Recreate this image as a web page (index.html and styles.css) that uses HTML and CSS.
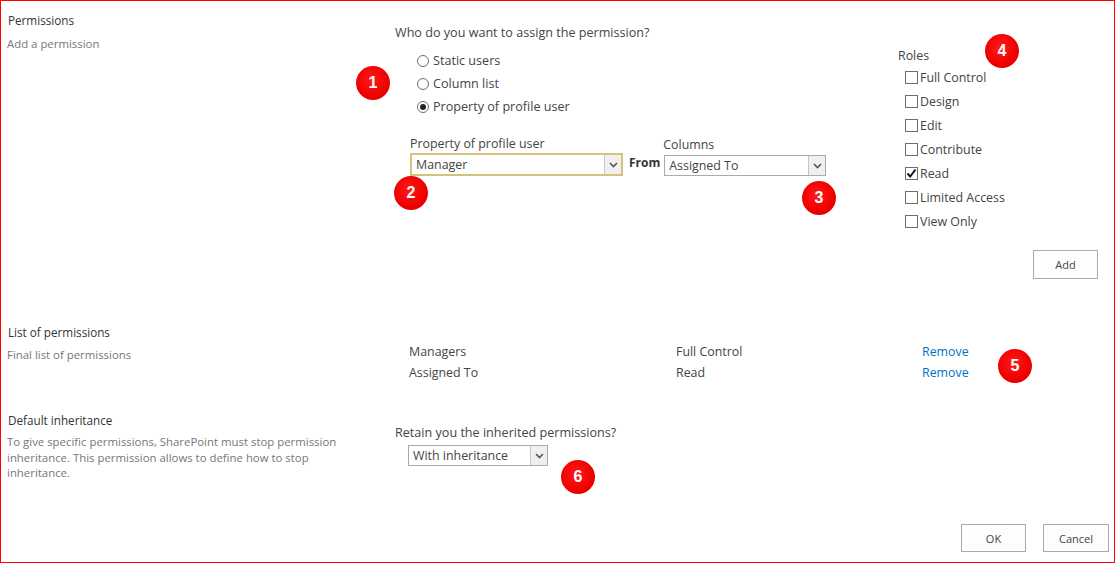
FILE: index.html
```html
<!DOCTYPE html>
<html>
<head>
<meta charset="utf-8">
<link rel="stylesheet" href="styles.css">
</head>
<body>
<div class="frame">
  <section class="sec sec-add">
    <div class="left">
      <div class="title">Permissions</div>
      <div class="desc">Add a permission</div>
    </div>
    <div class="middle">
      <div class="question">Who do you want to assign the permission?</div>
      <div class="radios">
        <div class="radio-row"><span class="radio"></span>Static users</div>
        <div class="radio-row"><span class="radio"></span>Column list</div>
        <div class="radio-row"><span class="radio checked"></span>Property of profile user</div>
      </div>
      <div class="pick-row">
        <div class="field">
          <div class="field-label">Property of profile user</div>
          <div class="select focus w-prop"><span class="sel-text">Manager</span><span class="sel-arrow"><svg width="9" height="6" viewBox="0 0 9 6"><path d="M1 1 L4.5 4.5 L8 1" fill="none" stroke="#555" stroke-width="1.6"/></svg></span></div>
        </div>
        <div class="from">From</div>
        <div class="field">
          <div class="field-label">Columns</div>
          <div class="select w-col"><span class="sel-text">Assigned To</span><span class="sel-arrow"><svg width="9" height="6" viewBox="0 0 9 6"><path d="M1 1 L4.5 4.5 L8 1" fill="none" stroke="#555" stroke-width="1.6"/></svg></span></div>
        </div>
      </div>
    </div>
    <div class="roles">
      <div class="roles-title">Roles</div>
      <div class="check-row"><span class="check"></span>Full Control</div>
      <div class="check-row"><span class="check"></span>Design</div>
      <div class="check-row"><span class="check"></span>Edit</div>
      <div class="check-row"><span class="check"></span>Contribute</div>
      <div class="check-row"><span class="check"><svg width="11" height="11" viewBox="0 0 11 11"><path d="M1.5 5.5 L4.2 8.5 L9.5 1.5" fill="none" stroke="#111" stroke-width="2"/></svg></span>Read</div>
      <div class="check-row"><span class="check"></span>Limited Access</div>
      <div class="check-row"><span class="check"></span>View Only</div>
      <div class="btn-wrap"><button class="btn btn-add">Add</button></div>
    </div>
  </section>

  <section class="sec sec-list">
    <div class="left">
      <div class="title">List of permissions</div>
      <div class="desc">Final list of permissions</div>
    </div>
    <div class="perm-table">
      <div>Managers</div><div>Full Control</div><a class="link">Remove</a>
      <div>Assigned To</div><div>Read</div><a class="link">Remove</a>
    </div>
  </section>

  <section class="sec sec-inherit">
    <div class="left">
      <div class="title">Default inheritance</div>
      <div class="desc desc-long">To give specific permissions, SharePoint must stop permission inheritance. This permission allows to define how to stop inheritance.</div>
    </div>
    <div class="middle">
      <div class="question-sm">Retain you the inherited permissions?</div>
      <div class="select w-inh"><span class="sel-text">With inheritance</span><span class="sel-arrow"><svg width="9" height="6" viewBox="0 0 9 6"><path d="M1 1 L4.5 4.5 L8 1" fill="none" stroke="#555" stroke-width="1.6"/></svg></span></div>
    </div>
  </section>

  <footer class="footer">
    <button class="btn btn-ok">OK</button>
    <button class="btn btn-cancel">Cancel</button>
  </footer>

  <span class="badge b1">1</span>
  <span class="badge b2">2</span>
  <span class="badge b3">3</span>
  <span class="badge b4">4</span>
  <span class="badge b5">5</span>
  <span class="badge b6">6</span>
</div>
</body>
</html>
```

FILE: styles.css
```css
* { box-sizing: border-box; }
html, body { margin: 0; padding: 0; background: #fff; }
body {
  font-family: "Open Sans", "Noto Sans", sans-serif;
  font-size: 12.4px;
  color: #444;
}
.frame {
  position: relative;
  width: 1115px;
  height: 563px;
  border: 1px solid #ff0000;
  display: flex;
  flex-direction: column;
  padding: 10px 16px 0 6px;
}
.sec { display: flex; }
.left { width: 388px; flex: none; }
.title { line-height: 18px; color: #333; font-size: 11.7px; padding-left: 1px; }
.desc { line-height: 16px; color: #777; font-size: 11.4px; margin-top: 7px; }

.middle { flex: 1; }
.question { margin-top: 13px; line-height: 18px; font-size: 12.6px; }
.radios { margin-top: 7px; padding-left: 22px; }
.radio-row { height: 23px; display: flex; align-items: center; font-size: 12.6px; }
.radio {
  width: 12px; height: 12px; border: 1px solid #6d6d6d; border-radius: 50%;
  margin-right: 4px; position: relative; background: #fff;
}
.radio.checked::after {
  content: ""; position: absolute; left: 2px; top: 2px; width: 6px; height: 6px;
  border-radius: 50%; background: #222;
}
.pick-row { display: flex; align-items: flex-end; margin-top: 17px; padding-left: 15px; }
.field-label { line-height: 18px; }
.select {
  height: 21px; border: 1px solid #ababab; background: #fff; display: flex;
  align-items: stretch; margin-top: 1px; margin-left: 1px;
}
.select.focus { border: 2px solid #d5c27a; height: 23px; margin-top: 0; margin-left: 0; }
.sel-text { flex: 1; padding-left: 4px; line-height: 19px; color: #444; }
.sel-arrow {
  width: 17px; background: #f0f0f0; border-left: 1px solid #c6c6c6;
  display: flex; align-items: center; justify-content: center;
}
.w-prop { width: 213px; }
.w-col { width: 162px; }
.w-inh { width: 140px; margin-left: 13px; margin-top: 3px; }
.from { font-weight: 700; color: #333; margin: 0 3px 4px 6px; line-height: 18px; font-size: 12px; }

.roles { width: 200px; flex: none; }
.roles-title { margin-top: 36px; line-height: 18px; }
.check-row { height: 24px; display: flex; align-items: center; padding-left: 7px; }
.check {
  width: 13px; height: 13px; border: 1px solid #6d6d6d; background: #fff;
  margin-right: 2px; display: flex; align-items: center; justify-content: center;
}
.btn-wrap { display: flex; justify-content: flex-end; margin-top: 17px; }
.btn {
  font-family: "Open Sans", "Noto Sans", sans-serif; font-size: 11px; color: #444;
  background: #fdfdfd; border: 1px solid #ababab; padding: 0; height: 29px;
}
.btn-add { width: 65px; }

.sec-list { margin-top: 44px; }
.sec-list .desc { margin-top: 6px; }
.perm-table {
  margin-top: 18px; padding-left: 14px;
  display: grid; grid-template-columns: 267px 246px auto; grid-auto-rows: 21px;
  align-items: center; align-content: start;
}
.link { color: #0072c6; }

.sec-inherit { margin-top: 28px; }
.sec-inherit .desc { margin-top: 5px; line-height: 15.5px; width: 345px; }
.question-sm { margin-top: 13px; line-height: 18px; font-size: 12.6px; }

.footer { margin-top: auto; display: flex; justify-content: flex-end; gap: 17px; padding-bottom: 10px; margin-right: -11px; }
.btn-ok { width: 65px; height: 28px; }
.btn-cancel { width: 66px; height: 28px; }

.badge {
  position: absolute; width: 34px; height: 34px; border-radius: 50%;
  background: radial-gradient(circle at 45% 40%, #ff1a1a 0%, #ee0000 60%, #d80000 100%);
  color: #fff; font-family: "Liberation Sans", Arial, sans-serif; font-weight: 700; font-size: 16px;
  display: flex; align-items: center; justify-content: center;
}
.b1 { left: 355px; top: 65px; }
.b2 { left: 393px; top: 175px; }
.b3 { left: 801px; top: 180px; }
.b4 { left: 984px; top: 33px; }
.b5 { left: 997px; top: 348px; }
.b6 { left: 560px; top: 459px; }
```
